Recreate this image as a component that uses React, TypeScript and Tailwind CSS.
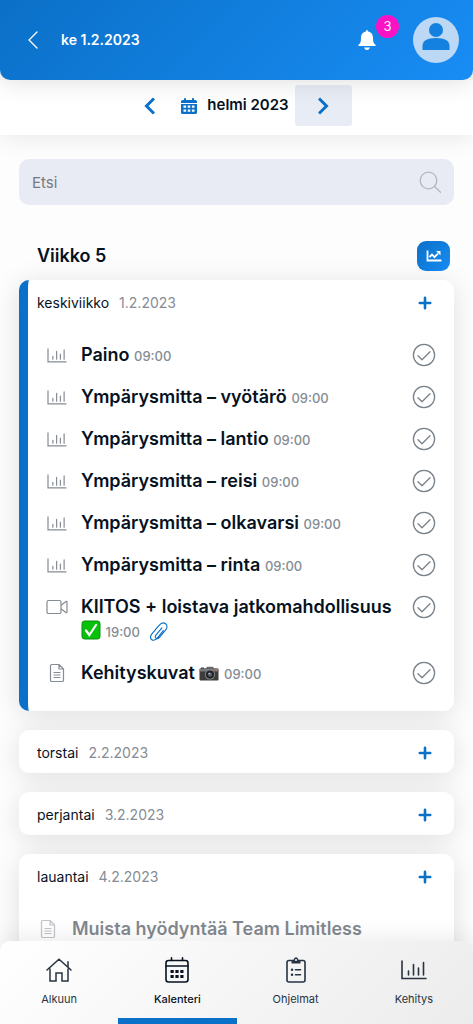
import type { ReactNode } from "react"
import clsx from "clsx"

type Kind = "chart" | "video" | "file"

interface Task {
    kind: Kind
    title: string
    time?: string
    emoji?: ReactNode
    attachment?: boolean
}

interface Day {
    name: string
    date: string
    active?: boolean
    tasks?: Task[]
}

function ChartIcon({ className }: { className?: string }) {
    return (
        <svg viewBox="0 0 26 20" fill="none" stroke="currentColor" strokeWidth="1.6" strokeLinecap="round" className={className}>
            <path d="M1 1v17.5h24M7.5 15v-4M12.5 15V4.5M17.5 15V8M22.5 15V2.5" />
        </svg>
    )
}

function VideoIcon() {
    return (
        <svg viewBox="0 0 22 16" fill="none" stroke="currentColor" strokeWidth="1.2" strokeLinejoin="round" className="h-4 w-[22px]">
            <rect x="1" y="1.5" width="14" height="13" rx="1.6" />
            <path d="M15 6.2 20 2.4q1-.5 1 .5v10.2q0 1-1 .5L15 9.8" />
        </svg>
    )
}

function FileIcon() {
    return (
        <svg viewBox="0 0 16 20" fill="none" stroke="currentColor" strokeWidth="1.2" strokeLinejoin="round" className="h-5 w-4">
            <path d="M10 1.5H2.8q-1.3 0-1.3 1.3v14.4q0 1.3 1.3 1.3h10.4q1.3 0 1.3-1.3V6L10 1.500V6h4.500M4.500 9.500h7M4.500 12h7M4.500 14.500h7" />
        </svg>
    )
}

function TaskIcon({ kind }: { kind: Kind }) {
    if (kind === "video") return <VideoIcon />
    if (kind === "file") return <FileIcon />
    return <ChartIcon className="h-[15px] w-5" />
}

function CheckEmoji() {
    return (
        <svg viewBox="0 0 20 20" role="img" aria-label="valmis" className="inline-block size-5 align-[-3px]">
            <rect x="1" y="1" width="18" height="18" rx="2.5" fill="#07c10b" stroke="#0a8f10" />
            <path d="M5 10.500 8.300 15 15 5" fill="none" stroke="#fff" strokeWidth="2.200" strokeLinecap="round" />
        </svg>
    )
}

function CameraEmoji() {
    return (
        <svg viewBox="0 0 20 16" role="img" aria-label="kamera" className="inline-block h-4 w-5 align-[-3px]">
            <path d="M6.500 3 8 .8h6L15.500 3z" fill="#6b6b6b" />
            <rect x=".5" y="2.500" width="19" height="12" rx="1.200" fill="#3d3d3d" />
            <path d="M.5 3.700q0-1.200 1.200-1.200h16.600q1.200 0 1.200 1.200V5.500H.5z" fill="#77797b" />
            <rect x="2" y="1.500" width="3" height="1.500" fill="#4a4a4a" />
            <circle cx="11" cy="8.600" r="5" fill="#8b8d8f" />
            <circle cx="11" cy="8.600" r="4.100" fill="#202226" />
            <circle cx="11" cy="8.600" r="2.200" fill="#56606c" />
            <circle cx="10.300" cy="7.600" r=".8" fill="#c8d2dc" />
            <circle cx="17.500" cy="4" r=".8" fill="#d8743c" />
        </svg>
    )
}

function PaperclipIcon() {
    return (
        <svg viewBox="0 0 18 20" fill="none" stroke="currentColor" strokeWidth="1.100" strokeLinecap="round" strokeLinejoin="round" className="h-5 w-[18px]">
            <path d="m13.300 8.700-5.800 7.200c-1.900 2.300-4.300 3-5.900 1.600-1.600-1.300-1.200-3.700.5-5.800l7-8.400C11 1 13.700.3 15.600 1.800s1.800 4 .1 6.100l-6.200 7.400c-1.100 1.300-2.500 1.700-3.500.9s-.9-2.100.1-3.300l5.800-7" />
        </svg>
    )
}

function CheckCircle() {
    return (
        <svg viewBox="0 0 24 24" fill="none" stroke="currentColor" strokeWidth="1.300" strokeLinecap="round" strokeLinejoin="round" className="size-6">
            <circle cx="12" cy="12" r="10.600" />
            <path d="m6 12.800 4 3.900 8-8" />
        </svg>
    )
}

function PlusIcon() {
    return (
        <svg viewBox="0 0 14 14" fill="none" stroke="#0b70c7" strokeWidth="2.600" strokeLinecap="round" className="size-3.5">
            <path d="M7 1.800v10.400M1.800 7h10.400" />
        </svg>
    )
}

function CalendarSolid() {
    return (
        <svg viewBox="0 0 16 18" className="h-[18px] w-4">
            <path fill="#0b70c7" d="M4 1q1 0 1 1v1h6V2q0-1 1-1t1 1v1h1.200Q16 3 16 4.600V6H0V4.600Q0 3 1.800 3H3V2q0-1 1-1zM0 7h16v8.400q0 1.600-1.600 1.600H1.600Q0 17 0 15.400z" />
            <path fill="#fff" d="M2.500 8.500h2.600v2.300H2.500zM6.700 8.500h2.600v2.300H6.700zM10.900 8.500h2.600v2.300h-2.600zM2.500 12.500h2.600v2.300H2.500zM6.700 12.500h2.600v2.300H6.700zM10.900 12.500h2.600v2.300h-2.600z" />
        </svg>
    )
}

function HomeIcon() {
    return (
        <svg viewBox="0 0 26 24" fill="none" stroke="currentColor" strokeWidth="1.500" strokeLinecap="round" className="h-6 w-[26px]">
            <path d="M1 12 13 1.200 25 12M22 9V3.800M4 11v12h6v-8h6v8h6V11" />
        </svg>
    )
}

function CalendarIcon() {
    return (
        <svg viewBox="0 0 24 26" fill="none" stroke="currentColor" strokeWidth="1.600" strokeLinecap="round" className="h-[26px] w-6">
            <rect x="1" y="3.500" width="22" height="21.500" rx="2.500" />
            <path d="M1 9h22M6.500 3.500V.8M17.500 3.500V.8" />
            <path fill="currentColor" stroke="none" d="M5.500 13h3.200v3H5.500zM10.400 13h3.200v3h-3.200zM15.300 13h3.200v3h-3.200zM5.500 18h3.200v3H5.500zM10.400 18h3.200v3h-3.200zM15.300 18h3.200v3h-3.200z" />
        </svg>
    )
}

function ClipboardIcon() {
    return (
        <svg viewBox="0 0 20 26" fill="none" stroke="currentColor" strokeWidth="1.600" strokeLinecap="round" className="h-[26px] w-5">
            <rect x="1" y="3.500" width="18" height="21.500" rx="2" />
            <path fill="currentColor" stroke="none" d="M5.500 3h2Q8 .3 10 .3T12.500 3h2v3.600h-9z" />
            <circle cx="10" cy="3" r="1" fill="#fff" stroke="none" />
            <path d="M9.500 12.800h5M9.500 17.800h5" />
            <path d="M6 12.800h.1M6 17.800h.1" strokeWidth="2.400" />
        </svg>
    )
}

const viikko: Day[] = [
    {
        name: "keskiviikko",
        date: "1.2.2023",
        active: true,
        tasks: [
            { kind: "chart", title: "Paino", time: "09:00" },
            { kind: "chart", title: "Ympärysmitta – vyötärö", time: "09:00" },
            { kind: "chart", title: "Ympärysmitta – lantio", time: "09:00" },
            { kind: "chart", title: "Ympärysmitta – reisi", time: "09:00" },
            { kind: "chart", title: "Ympärysmitta – olkavarsi", time: "09:00" },
            { kind: "chart", title: "Ympärysmitta – rinta", time: "09:00" },
            { kind: "video", title: "KIITOS + loistava jatkomahdollisuus", time: "19:00", emoji: <CheckEmoji />, attachment: true },
            { kind: "file", title: "Kehityskuvat", time: "09:00", emoji: <CameraEmoji /> },
        ],
    },
    { name: "torstai", date: "2.2.2023" },
    { name: "perjantai", date: "3.2.2023" },
    { name: "lauantai", date: "4.2.2023", tasks: [{ kind: "file", title: "Muista hyödyntää Team Limitless" }] },
]

const tabs = [
    { label: "Alkuun", icon: <HomeIcon /> },
    { label: "Kalenteri", icon: <CalendarIcon />, current: true },
    { label: "Ohjelmat", icon: <ClipboardIcon /> },
    { label: "Kehitys", icon: <ChartIcon className="h-5 w-[26px]" /> },
]

function TaskRow({ task, muted }: { task: Task; muted: boolean }) {
    return (
        <li className={clsx("flex items-start", muted && "opacity-50")}>
            <span className="flex h-6 w-6 shrink-0 items-center justify-center text-[#858c94]">
                <TaskIcon kind={task.kind} />
            </span>
            <p className="ml-3 min-w-0 flex-1 text-lg leading-6 font-semibold">
                {task.title} {task.emoji}{" "}
                {task.time && <span className="text-[13px] leading-none font-medium text-[#858c94]">{task.time}</span>}
                {task.attachment && (
                    <button aria-label="Liite" className="ml-2.5 inline-block h-5 align-[-5px] text-[#0b70c7]">
                        <PaperclipIcon />
                    </button>
                )}
            </p>
            {!muted && (
                <button aria-label={`Kuittaa ${task.title}`} className="ml-2 shrink-0 text-[#78818a]">
                    <CheckCircle />
                </button>
            )}
        </li>
    )
}

function DayCard({ day }: { day: Day }) {
    return (
        <section
            className={clsx(
                "rounded-[10px] bg-white shadow-[0_4px_28px_rgba(0,0,0,0.12)]",
                day.active && "border-l-[9px] border-[#0b70c7]"
            )}
        >
            <header className={clsx("flex h-[43px] items-center pt-0.5 pr-[22px]", day.active ? "pl-[9px]" : "pl-[18px]")}>
                <h3 className="text-sm">{day.name}</h3>
                <span className="ml-2.5 text-sm text-[#858c94]">{day.date}</span>
                <button aria-label={`Lisää ${day.name}`} className="ml-auto">
                    <PlusIcon />
                </button>
            </header>
            {day.tasks && (
                <ul className="flex flex-col gap-[18px] pt-5 pr-[18px] pb-[26px] pl-[17px]">
                    {day.tasks.map((task) => (
                        <TaskRow key={task.title} task={task} muted={!day.active} />
                    ))}
                </ul>
            )}
        </section>
    )
}

export default function App() {
    return (
        <div className="relative flex h-screen flex-col overflow-hidden bg-[#fdfdfe] font-['Inter',sans-serif] text-[#06121f]">
            <header className="z-20 flex h-20 shrink-0 items-center rounded-b-[10px] bg-linear-[135deg,#0b70c7,#188df5] pr-3.5 pl-[21px] text-white shadow-[0_2px_24px_rgba(0,0,0,0.13)]">
                <button aria-label="Takaisin" className="flex size-6 items-center justify-center">
                    <svg viewBox="0 0 10 18" fill="none" stroke="currentColor" strokeWidth="1.300" strokeLinecap="round" className="h-[18px] w-2.5">
                        <path d="M9 1 1 9l8 8" />
                    </svg>
                </button>
                <h1 className="ml-4 text-sm font-semibold">ke 1.2.2023</h1>
                <button aria-label="Ilmoitukset" className="relative mr-[37px] ml-auto">
                    <svg viewBox="0 0 18 20" fill="currentColor" className="h-5 w-[18px]">
                        <path d="M9 0q1 0 1.200 1.500C14 2.300 15 5 15 8.500c0 3.500.7 4.500 2.200 6Q18.500 16 17 16H1q-1.500 0-.2-1.500c1.500-1.500 2.200-2.500 2.200-6C3 5 4 2.300 7.800 1.500Q8 0 9 0zM6 17.500h6Q11 20 9 20t-3-2.500z" />
                    </svg>
                    <span className="absolute -top-[15px] left-[18px] flex size-[23px] items-center justify-center rounded-full bg-[#fb12c5] text-[13px]">3</span>
                </button>
                <button aria-label="Profiili" className="size-[46px] rounded-full bg-[#bcd8f5] text-[#1480df]">
                    <svg viewBox="0 0 46 46" fill="currentColor">
                        <circle cx="23" cy="13" r="7" />
                        <path d="M9.500 33v-4q0-8 13.500-8t13.500 8v4z" />
                    </svg>
                </button>
            </header>

            <div className="z-10 flex h-[55px] shrink-0 items-center justify-center bg-white pb-1 shadow-[0_2px_24px_rgba(0,0,0,0.09)]">
                <button aria-label="Edellinen kuukausi" className="flex h-10 w-14 items-center justify-center">
                    <svg viewBox="0 0 11 18" fill="none" stroke="#0b70c7" strokeWidth="3" className="h-[18px] w-[11px]">
                        <path d="M10 1.500 2.500 9l7.500 7.500" />
                    </svg>
                </button>
                <button className="ml-1 flex items-center gap-2.5 text-[15px] font-semibold">
                    <CalendarSolid />
                    helmi 2023
                </button>
                <button aria-label="Seuraava kuukausi" className="ml-1.5 flex h-[41px] w-[57px] items-center justify-center rounded-[3px] bg-[#e8edf5]">
                    <svg viewBox="0 0 11 18" fill="none" stroke="#0b70c7" strokeWidth="3" className="h-[18px] w-[11px]">
                        <path d="M1 1.500 8.500 9 1 16.500" />
                    </svg>
                </button>
            </div>

            <main className="min-h-0 flex-1 overflow-y-auto px-[19px] pt-6 pb-24 [scrollbar-width:none]">
                <div className="flex h-[46px] items-center rounded-[10px] bg-[#e8ebf3] px-[13px]">
                    <input
                        type="search"
                        aria-label="Etsi"
                        placeholder="Etsi"
                        className="h-full min-w-0 flex-1 bg-transparent text-[15px] outline-none placeholder:text-[#757a80]"
                    />
                    <svg viewBox="0 0 22 22" fill="none" stroke="#b4b6ba" strokeWidth="1.300" strokeLinecap="round" className="size-[22px]">
                        <circle cx="9.500" cy="9.500" r="8.300" />
                        <path d="m15.500 15.500 6 5.800" />
                    </svg>
                </div>

                <div className="mt-9 mb-[9px] flex items-center justify-between pr-1 pl-[18px]">
                    <h2 className="text-lg leading-6 font-semibold">Viikko 5</h2>
                    <button aria-label="Tilastot" className="flex h-[30px] w-[33px] items-center justify-center rounded-[9px] bg-linear-[135deg,#0b70c7,#188df5]">
                        <svg viewBox="0 0 16 12" fill="none" stroke="#fff" strokeWidth="1.800" className="h-3 w-4">
                            <path d="M1.500.5v10H15.500M3.500 7 6 4.500l2.500 2.600L12 3.600" />
                            <path d="M10 1h4.500v4.500z" fill="#fff" stroke="none" />
                        </svg>
                    </button>
                </div>

                <div className="flex flex-col gap-[19px]">
                    {viikko.map((day) => (
                        <DayCard key={day.name} day={day} />
                    ))}
                </div>
            </main>

            <nav className="absolute inset-x-0 bottom-0 z-20 grid h-[83px] grid-cols-4 rounded-t-[10px] bg-linear-[135deg,#ffffff,#ececec] shadow-[0_-2px_24px_rgba(0,0,0,0.09)]">
                {tabs.map((tab) => (
                    <a
                        key={tab.label}
                        href="#"
                        aria-current={tab.current ? "page" : undefined}
                        className={clsx(
                            "flex flex-col items-center border-b-[6px] pt-4 text-[11px]",
                            tab.current ? "border-[#0b70c7] font-medium" : "border-transparent text-[#263442]"
                        )}
                    >
                        <span className="flex h-[26px] items-center">{tab.icon}</span>
                        <span className="mt-2 leading-4">{tab.label}</span>
                    </a>
                ))}
            </nav>
        </div>
    )
}
